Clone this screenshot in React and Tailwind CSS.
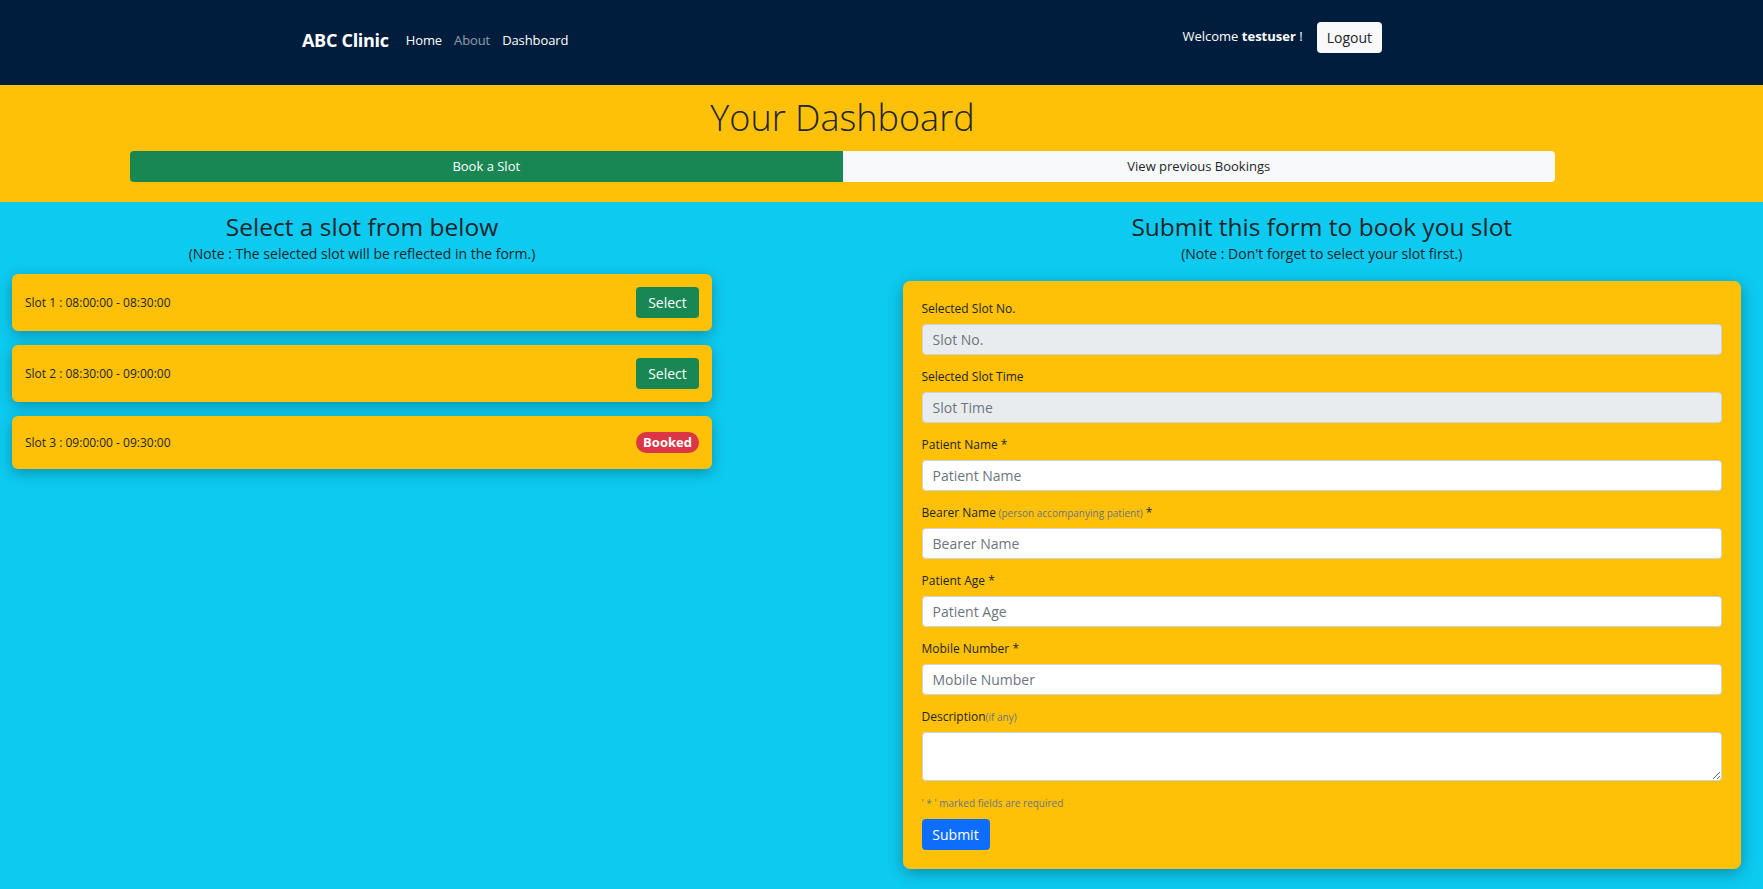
import React from 'react';

const SLOTS = [
  { no: 1, time: '08:00:00 - 08:30:00', booked: false },
  { no: 2, time: '08:30:00 - 09:00:00', booked: false },
  { no: 3, time: '09:00:00 - 09:30:00', booked: true },
];

function Field({ label, hint, required, placeholder, disabled }) {
  return (
    <div className="mb-[13px]">
      <label className="block h-[18px] mb-[6px] text-[12px] leading-[18px] font-medium text-[#212529]">
        {label}
        {hint && <span className="text-[10px] font-normal text-[#6c757d]"> {hint}</span>}
        {required && ' *'}
      </label>
      <input
        placeholder={placeholder}
        disabled={disabled}
        className={`block w-full h-[31px] px-[10px] text-[14px] rounded-[4px] border border-[#ced4da] outline-none placeholder:text-[#6c757d] ${
          disabled ? 'bg-[#e9ecef]' : 'bg-white'
        }`}
      />
    </div>
  );
}

export default function App() {
  return (
    <div className="min-h-screen bg-[#0dcaf0] text-[#212529] font-['Open_Sans',sans-serif]">
      {/* navbar */}
      <nav className="h-[85px] bg-[#001d3d] flex items-center justify-between pl-[302px] pr-[381px] pb-[9px]">
        <div className="flex items-center mt-[5px]">
          <span className="text-white font-bold text-[18px] tracking-[-0.3px]">ABC Clinic</span>
          <div className="ml-[17px] flex items-center gap-[12px] text-[13px] tracking-[-0.1px]">
            <span className="text-white">Home</span>
            <span className="text-white/55">About</span>
            <span className="text-white">Dashboard</span>
          </div>
        </div>
        <div className="flex items-center">
          <span className="text-white text-[13px] -mt-[2px]">
            Welcome <b>testuser</b> !
          </span>
          <button className="ml-[14px] h-[31px] px-[10px] bg-[#f8f9fa] rounded-[4px] text-[14px] text-[#212529] -mt-[1px]">
            Logout
          </button>
        </div>
      </nav>

      {/* header */}
      <section className="bg-[#ffc107] pt-[11px] pb-[20px]">
        <div className="ml-[130px] mr-[208px]">
          <h1 className="text-center text-[36px] font-light leading-[43px] text-[#212529]">Your Dashboard</h1>
          <div className="mt-[12px] flex h-[31px] rounded-[4px] overflow-hidden text-[13px]">
            <button className="flex-1 bg-[#198754] text-white">Book a Slot</button>
            <button className="flex-1 bg-[#f8f9fa] text-[#212529]">View previous Bookings</button>
          </div>
        </div>
      </section>

      {/* body */}
      <div className="grid grid-cols-2">
        {/* slots */}
        <div className="w-[724px] px-[12px] pt-[11px]">
          <h4 className="text-center text-[24.5px] leading-[28px]">Select a slot from below</h4>
          <p className="text-center text-[14px] leading-[19px] mt-[3px]">
            (Note : The selected slot will be reflected in the form.)
          </p>
          <div className="mt-[11px] flex flex-col gap-[14px]">
            {SLOTS.map((s) => (
              <div
                key={s.no}
                className="flex items-center justify-between bg-[#ffc107] rounded-[6px] px-[13px] py-[13px] shadow-[0_4px_14px_rgba(0,0,0,0.28)]"
              >
                <span className="text-[12px] leading-[27px] font-medium">
                  Slot {s.no} : {s.time}
                </span>
                {s.booked ? (
                  <span className="w-[63px] h-[21px] flex items-center justify-center rounded-full bg-[#dc3545] text-white text-[13px] font-bold">
                    Booked
                  </span>
                ) : (
                  <button className="w-[63px] h-[31px] rounded-[4px] bg-[#198754] text-white text-[14px]">
                    Select
                  </button>
                )}
              </div>
            ))}
          </div>
        </div>

        {/* form */}
        <div className="pl-[21px] pr-[22px] pt-[11px] pb-[20px]">
          <h4 className="text-center text-[24.5px] leading-[28px]">Submit this form to book you slot</h4>
          <p className="text-center text-[14px] leading-[19px] mt-[3px]">
            (Note : Don&apos;t forget to select your slot first.)
          </p>
          <div className="mt-[18px] bg-[#ffc107] rounded-[7px] px-[19px] pt-[19px] pb-[19px] shadow-[0_4px_16px_rgba(0,0,0,0.3)]">
            <Field label="Selected Slot No." placeholder="Slot No." disabled />
            <Field label="Selected Slot Time" placeholder="Slot Time" disabled />
            <Field label="Patient Name" required placeholder="Patient Name" />
            <Field label="Bearer Name" hint="(person accompanying patient)" required placeholder="Bearer Name" />
            <Field label="Patient Age" required placeholder="Patient Age" />
            <Field label="Mobile Number" required placeholder="Mobile Number" />
            <div>
              <label className="block h-[18px] mb-[6px] text-[12px] leading-[18px] font-medium">
                Description<span className="text-[10px] font-normal text-[#6c757d]">(if any)</span>
              </label>
              <textarea className="block w-full h-[49px] px-[10px] py-[4px] text-[14px] rounded-[4px] border border-[#ced4da] bg-white outline-none" />
            </div>
            <p className="mt-[13px] mb-[7px] h-[18px] text-[10px] leading-[18px] font-medium text-[#6c757d]">
              &apos; * &apos; marked fields are required
            </p>
            <button className="h-[31px] w-[68px] rounded-[4px] bg-[#0d6efd] text-white text-[14px]">Submit</button>
          </div>
        </div>
      </div>
    </div>
  );
}
